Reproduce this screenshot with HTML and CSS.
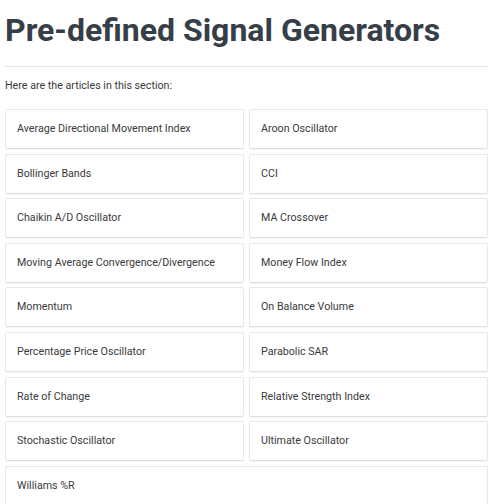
FILE: index.html
```html
<!DOCTYPE html>
<html lang="en">
<head>
<meta charset="utf-8">
<link rel="stylesheet" href="styles.css">
</head>
<body>
<main class="page">
  <h1 class="title">Pre-defined Signal Generators</h1>
  <hr class="rule">
  <p class="intro">Here are the articles in this section:</p>
  <div class="grid">
    <a class="card">Average Directional Movement Index</a>
    <a class="card">Aroon Oscillator</a>
    <a class="card">Bollinger Bands</a>
    <a class="card">CCI</a>
    <a class="card">Chaikin A/D Oscillator</a>
    <a class="card">MA Crossover</a>
    <a class="card">Moving Average Convergence/Divergence</a>
    <a class="card">Money Flow Index</a>
    <a class="card">Momentum</a>
    <a class="card">On Balance Volume</a>
    <a class="card">Percentage Price Oscillator</a>
    <a class="card">Parabolic SAR</a>
    <a class="card">Rate of Change</a>
    <a class="card">Relative Strength Index</a>
    <a class="card">Stochastic Oscillator</a>
    <a class="card">Ultimate Oscillator</a>
    <a class="card card-wide">Williams %R</a>
  </div>
</main>
</body>
</html>
```
FILE: styles.css
```css
html, body {
  margin: 0;
  padding: 0;
  background: #ffffff;
}
body {
  font-family: Roboto, "Liberation Sans", sans-serif;
  color: #333333;
}
.page {
  padding: 0 1px 0 5px;
}
.title {
  margin: 0;
  padding-top: 11px;
  font-size: 32px;
  line-height: 38px;
  font-weight: 700;
  color: #363e47;
  letter-spacing: 0;
}
.rule {
  margin: 17px 0 0 0;
  border: 0;
  border-top: 1px solid #e4e4e4;
  height: 0;
}
.intro {
  margin: 12px 0 0 0;
  font-size: 10.7px;
  line-height: 14px;
  color: #3a3a3a;
}
.grid {
  margin-top: 16px;
  display: grid;
  grid-template-columns: 1fr 1fr;
  column-gap: 5px;
  row-gap: 4.6px;
}
.card {
  display: flex;
  align-items: flex-start;
  height: 40px;
  box-sizing: border-box;
  padding: 12px 11px 0 11px;
  border: 1px solid #e6e8ea;
  border-bottom-color: #dcdfe2;
  border-radius: 2px;
  box-shadow: 0 1px 1px rgba(0,0,0,0.04);
  font-size: 10.7px;
  line-height: 14px;
  color: #3a3a3a;
  text-decoration: none;
}
.card-wide {
  grid-column: 1 / span 2;
}
```
